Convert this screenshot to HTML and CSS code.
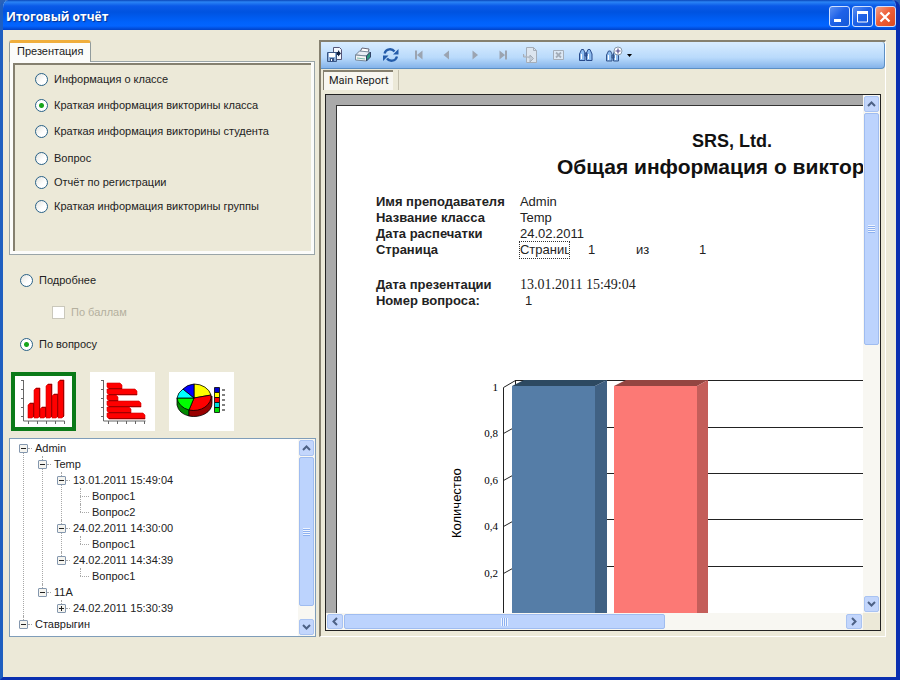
FILE: index.html
```html
<!DOCTYPE html>
<html lang="ru">
<head>
<meta charset="utf-8">
<title>Итоговый отчёт</title>
<link rel="stylesheet" href="styles.css">
</head>
<body>
<div class="window">
  <header class="titlebar">
    <h1 class="title">Итоговый отчёт</h1>
    <div class="window-buttons">
      <button class="winbtn" type="button"><svg width="18" height="18"><path d="M4 12.5h7" stroke="#fff" stroke-width="3"/></svg></button>
      <button class="winbtn" type="button"><svg width="18" height="18"><path d="M4 4.5h11" stroke="#fff" stroke-width="3"/><path d="M4.500 4v10h10V4" fill="none" stroke="#fff"/></svg></button>
      <button class="winbtn winbtn-close" type="button"><svg width="18" height="18"><path d="M4.500 4.500l9 9M13.500 4.500l-9 9" stroke="#fff" stroke-width="2.200"/></svg></button>
    </div>
  </header>

  <main class="content">
    <section class="sidebar">
      <div class="tabs"><button class="tab" type="button">Презентация</button></div>
      <div class="panel">
        <div class="panel-inner">
          <div class="group group-wide">
            <label class="choice"><input type="radio" name="report">Информация о классе</label>
            <label class="choice"><input type="radio" name="report" checked>Краткая информация викторины класса</label>
            <label class="choice"><input type="radio" name="report">Краткая информация викторины студента</label>
          </div>
          <div class="group">
            <label class="choice"><input type="radio" name="report">Вопрос</label>
            <label class="choice"><input type="radio" name="report">Отчёт по регистрации</label>
            <label class="choice"><input type="radio" name="report">Краткая информация викторины группы</label>
          </div>
        </div>
      </div>
      <div class="modes">
        <label class="choice"><input type="radio" name="mode">Подробнее</label>
        <label class="choice choice-disabled"><input type="checkbox" disabled>По баллам</label>
        <label class="choice"><input type="radio" name="mode" checked>По вопросу</label>
      </div>

      <div class="chart-types">
        <button class="chart-type chart-type-active" type="button">
          <svg width="57" height="51" viewBox="0 0 57 51">
            <path d="M8.500 4v41h41M6 4.500h3M6 13.500h3M6 22.500h3M6 31.500h3M6 40.500h3M13.500 45v3M22.500 45v3M31.500 45v3M40.500 45v3M49.500 45v3" fill="none" stroke="#666"/>
            <path d="M13 29l2-2h4v13l-2 2h-4zM19 14l2-2h4v28l-2 2h-4zM25 33l2-2h4v9l-2 2h-4zM31 10l2-2h4v32l-2 2h-4zM37 20l2-2h4v22l-2 2h-4zM43 6l2-2h4v36l-2 2h-4z" fill="#f00" stroke="#c00" stroke-width=".6"/>
            <path d="M18.500 28v13M24.500 13v28M30.500 32v9M36.500 9v32M42.500 19v22M48.500 5v36M15 27.500h4M21 12.500h4M27 31.500h4M33 8.500h4M39 18.500h4M45 4.500h4" stroke="#a00000"/>
          </svg>
        </button>
        <button class="chart-type" type="button">
          <svg width="65" height="59" viewBox="0 0 65 59">
            <path d="M13.500 8v41h42M11 8.500h3M11 17.500h3M11 26.500h3M11 35.500h3M11 44.500h3M18.500 49v3M27.500 49v3M36.500 49v3M45.500 49v3M54.500 49v3" fill="none" stroke="#666"/>
            <path d="M17 11h13l2 2v4H19l-2-2zM17 17h28l2 2v4H19l-2-2zM17 23h9l2 2v4h-9l-2-2zM17 29h32l2 2v4H19l-2-2zM17 35h22l2 2v4H19l-2-2zM17 41h36l2 2v4H19l-2-2z" fill="#f00" stroke="#c00" stroke-width=".6"/>
            <path d="M19 16.500h13M19 22.500h28M19 28.500h9M19 34.500h32M19 40.500h22M19 46.500h36" stroke="#a00000"/>
          </svg>
        </button>
        <button class="chart-type" type="button">
          <svg width="65" height="59" viewBox="0 0 65 59">
            <g stroke="#000" stroke-width=".8">
              <path d="M8 26v7a17 14 0 0 0 12 11v-7z" fill="#008a00"/>
              <path d="M20 37v7a18 13 0 0 0 23-13v-7z" fill="#900"/>
              <path d="M25 26V12a17.500 14 0 0 1 17 11z" fill="#ff0"/>
              <path d="M25 26l17-3A17.500 14 0 0 1 20 38z" fill="#f00"/>
              <path d="M25 26l-5 12A17.500 14 0 0 1 8 26z" fill="#0f0"/>
              <path d="M25 26H8a17 14 0 0 1 6-9z" fill="#0ff"/>
              <path d="M25 26l-11-9a17 14 0 0 1 11-5z" fill="#00f"/>
              <path d="M45.500 15.500h5v5h-5z" fill="#00c"/><path d="M45.500 20.500h5v5h-5z" fill="#ff0"/><path d="M45.500 25.500h5v5h-5z" fill="#f00"/><path d="M45.500 30.500h5v5h-5z" fill="#0dd"/><path d="M45.500 35.500h5v5h-5z" fill="#0d0"/>
              <path d="M53 18h3M53 23h3M53 28h3M53 33h3M53 38h3" stroke-width="1.200"/>
            </g>
          </svg>
        </button>
      </div>

      <div class="treebox">
        <ul class="tree">
          <li><span class="node"><button class="expander" type="button"></button>Admin</span>
            <ul>
              <li><span class="node"><button class="expander" type="button"></button>Temp</span>
                <ul>
                  <li><span class="node"><button class="expander" type="button"></button>13.01.2011 15:49:04</span>
                    <ul>
                      <li><span class="node leaf">Вопрос1</span></li>
                      <li><span class="node leaf">Вопрос2</span></li>
                    </ul>
                  </li>
                  <li><span class="node"><button class="expander" type="button"></button>24.02.2011 14:30:00</span>
                    <ul><li><span class="node leaf">Вопрос1</span></li></ul>
                  </li>
                  <li><span class="node"><button class="expander" type="button"></button>24.02.2011 14:34:39</span>
                    <ul><li><span class="node leaf">Вопрос1</span></li></ul>
                  </li>
                </ul>
              </li>
              <li><span class="node"><button class="expander" type="button"></button>11А</span>
                <ul><li><span class="node"><button class="expander expander-closed" type="button"></button>24.02.2011 15:30:39</span></li></ul>
              </li>
            </ul>
          </li>
          <li><span class="node"><button class="expander" type="button"></button>Ставрыгин</span></li>
        </ul>
        <div class="scroll scroll-v">
          <button class="arrow" type="button"><svg width="9" height="6"><path d="M1 5l3.500-3.500L8 5" fill="none" stroke="#4d6185" stroke-width="2"/></svg></button>
          <div class="track"><div class="thumb thumb-tree"><i class="grip"></i></div></div>
          <button class="arrow" type="button"><svg width="9" height="6"><path d="M1 1l3.500 3.500L8 1" fill="none" stroke="#4d6185" stroke-width="2"/></svg></button>
        </div>
      </div>
    </section>

    <section class="report">
      <div class="toolbar">
        <button class="tool" type="button"><svg width="18" height="18"><path d="M7.500 1.500h6l2 2v10h-8z" fill="#f5f9ff" stroke="#557"/><path d="M9 6h3V4l3 3.500-3 3V9H9z" fill="#124"/><path d="M1.500 6.500h9v9h-9z" fill="#8fb0d8" stroke="#3a5683"/><path d="M3 7h6v4H3z" fill="#fff"/><path d="M4 12h4v4H4z" fill="#365486"/><path d="M5 13h1v2H5z" fill="#fff"/></svg></button>
        <button class="tool" type="button"><svg width="18" height="18"><path d="M6 6l2-4 7 1-1 4" fill="#fff" stroke="#667"/><path d="M1.500 9l4-4 10 1-3 4z" fill="#e7edf5" stroke="#789"/><path d="M1.500 9l11 1v5l-11-1z" fill="#f4f4f4" stroke="#789"/><path d="M12.500 10l4-4v5l-4 4z" fill="#2a9a80" stroke="#346"/><path d="M3 12l8 1" stroke="#7ba"/></svg></button>
        <button class="tool" type="button"><svg width="18" height="18" fill="none" stroke="#245caa" stroke-width="2.300"><path d="M2.500 7.500C4 2.500 10 2 12.500 5.500M15 10.500c-1.500 5-7.500 5.500-10 2"/><path d="M16.500 3v5.500H11zM1 15V9.500h5.500z" fill="#245caa" stroke="none"/></svg></button>
        <button class="tool" type="button" disabled><svg width="18" height="18" fill="#9ba4b1"><path d="M5 4.500h2v9H5zM12.500 4.500v9L7 9z"/></svg></button>
        <button class="tool" type="button" disabled><svg width="18" height="18" fill="#9ba4b1"><path d="M11 4.500v9L5.500 9z"/></svg></button>
        <button class="tool" type="button" disabled><svg width="18" height="18" fill="#9ba4b1"><path d="M6.500 4.500v9L12 9z"/></svg></button>
        <button class="tool" type="button" disabled><svg width="18" height="18" fill="#9ba4b1"><path d="M11 4.500h2v9h-2zM5.500 4.500v9L11 9z"/></svg></button>
        <button class="tool" type="button" disabled><svg width="18" height="18" stroke="#a4adb8"><path d="M4.500 1.500h7l3 3v12h-10z" fill="#dce5ef"/><path d="M11.500 1.500v3h3" fill="none"/><path d="M1.500 8v3H8V9l3.500 3.500L8 16v-2.500" fill="#c3ccd7"/></svg></button>
        <button class="tool" type="button" disabled><svg width="18" height="18" fill="none" stroke="#a4adb8"><path d="M3.500 4.500h10v9h-10z" fill="#dce8f5"/><path d="M6 6.500l5 5M11 6.500l-5 5" stroke-width="1.800"/></svg></button>
        <button class="tool" type="button"><svg width="18" height="18" fill="#8fbdf0" stroke="#284b8c"><path d="M1.500 14.500V8l2-4.500h2L7 7v7.500zM8.500 14.500V7L10 3.500h2l2 4.500v6.500zM7 7h2v3H7z"/><path d="M3.500 8v5M10.500 8v5" stroke="#fff"/></svg></button>
        <button class="tool" type="button"><svg width="18" height="18" fill="#8fbdf0" stroke="#35548a"><path d="M.5 15V9l2-4h2L6 8v7zM7.500 15V8l1-3h2l2 4v6zM6 9h2v3H6z"/><path d="M2.500 9v5M9.500 9v5" stroke="#fff"/><circle cx="12" cy="5" r="4" fill="#fff" stroke="#89a"/><path d="M9.500 5h5M12 2.500v5" stroke="#534b8c" stroke-width="1.200"/></svg></button>
        <svg class="caret" width="5" height="3"><path d="M0 0h5L2.500 3z"/></svg>
      </div>
      <div class="report-tabs"><button class="report-tab" type="button">Main Report</button></div>

      <div class="viewer">
        <div class="viewport">
          <article class="page">
            <header class="page-head">
              <h2 class="company">SRS, Ltd.</h2>
              <h2 class="heading">Общая информация о виктор</h2>
            </header>
            <dl class="facts">
              <dt>Имя преподавателя</dt><dd>Admin</dd>
              <dt>Название класса</dt><dd>Temp</dd>
              <dt>Дата распечатки</dt><dd>24.02.2011</dd>
              <dt>Страница</dt><dd class="pages"><span class="field">Страниц</span><span>1</span><span>из</span><span>1</span></dd>
            </dl>
            <dl class="facts">
              <dt>Дата презентации</dt><dd class="serif">13.01.2011 15:49:04</dd>
              <dt>Номер вопроса:</dt><dd class="number">1</dd>
            </dl>
            <svg class="chart" width="100%" height="260">
              <g stroke="#222" fill="none">
                <path d="M166.500 260V15.500l12-7M178.500 8v7M166.500 61.500l9-5M166.500 108.500l9-5M166.500 154.500l9-5M166.500 201.500l9-5"/>
                <line x1="178" y1="8.500" x2="100%" y2="8.500"/>
                <line x1="260" y1="55.500" x2="100%" y2="55.500"/>
                <line x1="260" y1="101.500" x2="100%" y2="101.500"/>
                <line x1="260" y1="147.500" x2="100%" y2="147.500"/>
                <line x1="260" y1="194.500" x2="100%" y2="194.500"/>
              </g>
              <path d="M175 14h84v246h-84z" fill="#557da7"/>
              <path d="M175 14l12-6h83l-12 6z" fill="#2d4961"/>
              <path d="M258 14l12-6v252h-12z" fill="#406183"/>
              <path d="M277 14h84v246h-84z" fill="#fc7975"/>
              <path d="M277 14l12-6h82l-11 6z" fill="#944541"/>
              <path d="M360 14l11-6v252h-11z" fill="#c45e5a"/>
              <g class="ticks">
                <text x="161" y="19">1</text><text x="161" y="65">0,8</text><text x="161" y="112">0,6</text><text x="161" y="158">0,4</text><text x="161" y="205">0,2</text>
              </g>
              <text class="axis" transform="translate(124 166) rotate(-90)">Количество</text>
            </svg>
          </article>
        </div>
        <div class="scroll scroll-v">
          <button class="arrow" type="button"><svg width="9" height="6"><path d="M1 5l3.500-3.500L8 5" fill="none" stroke="#4d6185" stroke-width="2"/></svg></button>
          <div class="track"><div class="thumb thumb-page"><i class="grip"></i></div></div>
          <button class="arrow" type="button"><svg width="9" height="6"><path d="M1 1l3.500 3.500L8 1" fill="none" stroke="#4d6185" stroke-width="2"/></svg></button>
        </div>
        <div class="scroll scroll-h">
          <button class="arrow" type="button"><svg width="6" height="9"><path d="M5 1L1.500 4.500 5 8" fill="none" stroke="#4d6185" stroke-width="2"/></svg></button>
          <div class="track"><div class="thumb thumb-wide"><i class="grip"></i></div></div>
          <button class="arrow" type="button"><svg width="6" height="9"><path d="M1 1l3.500 3.500L1 8" fill="none" stroke="#4d6185" stroke-width="2"/></svg></button>
        </div>
      </div>
    </section>
  </main>
</div>
</body>
</html>
```
FILE: styles.css
```css
* { box-sizing: border-box; }

body {
  margin: 0;
  background: #2a62b8;
  font: 11px/16px "Liberation Sans", Arial, sans-serif;
  color: #222;
}

button {
  margin: 0;
  padding: 0;
  border: 0;
  background: none;
  font: inherit;
  color: inherit;
}

svg { display: block; }

.window {
  display: flex;
  flex-direction: column;
  height: 100vh;
  background: #ece9d8;
  border: solid #0a2fb0;
  border-width: 0 4px 3px 3px;
  border-left-color: #1f5fc0;
  border-radius: 8px 8px 0 0;
  overflow: hidden;
}

/* Title bar */
.titlebar {
  display: flex;
  flex: none;
  align-items: center;
  justify-content: space-between;
  height: 30px;
  padding: 3px 0 0 3px;
  background: linear-gradient(#0a46b8 0, #2a84f5 2px, #0a5ae8 6px, #0053e0 12px, #0062fb 22px, #0364ff 26px, #0042c8 30px);
}

.title {
  margin: 0;
  font: bold 12px/20px "Open Sans", "Trebuchet MS", sans-serif;
  color: #fff;
  text-shadow: 1px 1px 1px #08308c;
}

.window-buttons { display: flex; gap: 2px; }

.winbtn {
  width: 21px;
  height: 21px;
  border: 1px solid #cfe0ff;
  border-radius: 3px;
  background: linear-gradient(135deg, #5c90f2, #1f62e8 45%, #1458d8);
}

.winbtn-close { background: linear-gradient(135deg, #f3a088, #ee5f38 45%, #dd4a20); }

/* Main split */
.content {
  display: grid;
  flex: 1;
  grid-template-columns: 35% minmax(0, 1fr);
  gap: 3px;
  min-height: 0;
  padding: 10px 10px 40px 6px;
}

.sidebar {
  display: flex;
  flex-direction: column;
  min-height: 0;
}

.tabs { display: flex; }

.tab {
  height: 22px;
  margin-bottom: -1px;
  padding: 0 7px 3px;
  border: 1px solid #919b9c;
  border-top: 3px solid #f0ae3c;
  border-bottom: 0;
  border-radius: 3px 3px 0 0;
  background: #fcfcfa;
  z-index: 1;
}

.panel {
  height: 194px;
  margin-right: 1px;
  padding: 1px 3px 3px;
  border: 1px solid #9aa5a8;
  background: #fcfcfa;
}

.panel-inner {
  height: 100%;
  padding: 1px 20px;
  border: solid #85806f;
  border-width: 2px 0 0 2px;
  background: #ece9d8;
}

.group + .group { margin-top: 2px; }

.choice {
  display: flex;
  align-items: center;
  gap: 6px;
  height: 24px;
  white-space: nowrap;
}

.group-wide .choice { height: 26px; }

.choice input {
  flex: none;
  width: 13px;
  height: 13px;
  margin: 0;
  appearance: none;
  border: 1px solid #2a6288;
  background: linear-gradient(135deg, #e4e4de, #fff 60%);
}

.choice input[type="radio"] { border-radius: 50%; }

.choice input[type="radio"]:checked {
  background: radial-gradient(circle, #18a51c 2px, #fff 3px);
}

.choice-disabled { color: #b4b09e; }

.choice-disabled input {
  border-color: #cac8bb;
  background: #fff;
}

.modes {
  display: flex;
  flex-direction: column;
  gap: 8px;
  padding: 13px 11px 0;
}

.choice-disabled { padding-left: 32px; }

.chart-types {
  display: flex;
  gap: 14px;
  padding: 16px 2px 7px;
}

.chart-type {
  width: 65px;
  height: 59px;
  background: #fff;
}

.chart-type-active { border: 4px solid #0b7a18; }

/* Tree of sessions */
.treebox {
  display: flex;
  flex: 1;
  min-height: 0;
  border: 1px solid #7f9db9;
  background: #fff;
}

.tree, .tree ul {
  margin: 0;
  padding: 0;
  list-style: none;
}

.tree {
  flex: 1;
  padding: 1px 9px;
  overflow: hidden;
}

.tree ul { padding-left: 19px; }

.tree li { position: relative; }

.tree li::before, .tree li:not(:last-child)::after {
  content: "";
  position: absolute;
  left: 4px;
  top: 0;
  height: 8px;
  border-left: 1px dotted #a8a8a8;
}

.tree li:not(:last-child)::after {
  top: 8px;
  bottom: 0;
  height: auto;
}

.tree > li:first-child::before { display: none; }

.node {
  position: relative;
  z-index: 1;
  display: flex;
  align-items: center;
  height: 16px;
}

.node::before {
  content: "";
  position: absolute;
  left: 9px;
  width: 4px;
  border-top: 1px dotted #a8a8a8;
}

.node.leaf { padding-left: 16px; }

.node.leaf::before {
  left: 4px;
  width: 9px;
}

.expander {
  width: 9px;
  height: 9px;
  margin-right: 7px;
  border: 1px solid #8497ae;
  border-radius: 1px;
  background: linear-gradient(#222, #222) center / 5px 1px no-repeat, #f5f4ef;
}

.expander-closed {
  background: linear-gradient(#222, #222) center / 5px 1px no-repeat, linear-gradient(#222, #222) center / 1px 5px no-repeat, #f5f4ef;
}

/* Scroll bars */
.scroll {
  display: flex;
  background: #f8f7f2;
}

.scroll-v {
  flex-direction: column;
  width: 17px;
  padding: 1px;
}

.scroll-h { height: 17px; padding: 1px; }

.track {
  flex: 1;
  min-width: 0;
  min-height: 0;
}

.scroll-v .track { padding-top: 1px; }
.scroll-h .track { padding-left: 1px; }

.arrow, .thumb {
  display: grid;
  place-items: center;
  border: 1px solid #a9c3f2;
  border-radius: 2px;
  background: #c3d6fc;
}

.arrow {
  flex: none;
  width: 15px;
  height: 16px;
}

.scroll-h .arrow { width: 16px; height: 15px; }

.thumb {
  border-color: #9fbcf0;
  background: #bcd3fd;
}

.thumb-tree { height: 92%; }
.thumb-page { height: 48%; }
.thumb-wide { width: 64%; height: 15px; }

.grip {
  width: 7px;
  height: 8px;
  background: repeating-linear-gradient(#eef4fe 0 1px, #8cb0f0 1px 2px);
}

.scroll-h .grip {
  background: repeating-linear-gradient(90deg, #eef4fe 0 1px, #8cb0f0 1px 2px);
}

/* Report viewer */
.report {
  display: flex;
  flex-direction: column;
  min-width: 0;
  min-height: 0;
  padding: 0 4px 5px;
  border: solid;
  border-width: 2px 1px 1px 2px;
  border-color: #85806f #fff #fff #85806f;
}

.toolbar {
  display: flex;
  flex: none;
  align-items: center;
  height: 27px;
  margin: 0 -4px;
  border-right: 1px solid #5c8fc4;
  border-bottom: 1px solid #5c8fc4;
  border-radius: 0 3px 4px 0;
  background: linear-gradient(#d8ecff, #b9dafb 60%, #84b3ea);
}

.tool {
  display: grid;
  place-items: center;
  width: 28px;
  height: 26px;
}

.caret { margin-left: -2px; }

.report-tabs {
  display: flex;
  flex: none;
  height: 25px;
  margin-left: -2px;
  padding-top: 1px;
}

.report-tabs::after {
  content: "";
  width: 5px;
  height: 20px;
  border-right: 1px solid #c4c0ae;
}

.report-tab {
  height: 20px;
  padding: 0 4px 0 5px;
  border: solid #85806f;
  border-width: 2px 0 0 1px;
  background: #f7f6f0;
  font: 11px/16px Roboto, Tahoma, sans-serif;
}

.viewer {
  display: grid;
  flex: 1;
  grid-template: minmax(0, 1fr) 17px / minmax(0, 1fr) 17px;
  min-height: 0;
  border: 1px solid #222;
}

.viewport {
  padding: 10px 0 0 10px;
  background: #aaa;
  overflow: hidden;
}

.page {
  min-height: 100%;
  padding-top: 22px;
  border: solid #333;
  border-width: 1px 0 0 1px;
  background: #fff;
  font-size: 13px;
}

.page-head {
  width: 350px;
  margin-left: 220px;
}

.company, .heading {
  margin: 0;
  font: bold 18px/26px "Liberation Sans", Arial, sans-serif;
  color: #111;
  white-space: nowrap;
}

.company { text-align: center; }
.heading { font-size: 21px; }

.facts {
  display: grid;
  grid-template-columns: 144px 1fr;
  margin: 14px 0 0 39px;
}

.facts + .facts { margin-top: 19px; }

.facts dt { font-weight: bold; }
.facts dd { margin: 0; }

.pages {
  display: grid;
  grid-template-columns: 68px 48px 63px 1fr;
}

.field {
  width: 49px;
  outline: 1px dotted #333;
  overflow: hidden;
}

.facts .serif { font: 14px/16px "Liberation Serif", "Times New Roman", serif; }
.facts .number { padding-left: 5px; }

.chart { margin-top: 63px; }

.ticks {
  font: 11px "Liberation Serif", "Times New Roman", serif;
  text-anchor: end;
}

.axis { font-size: 13px; }
```
